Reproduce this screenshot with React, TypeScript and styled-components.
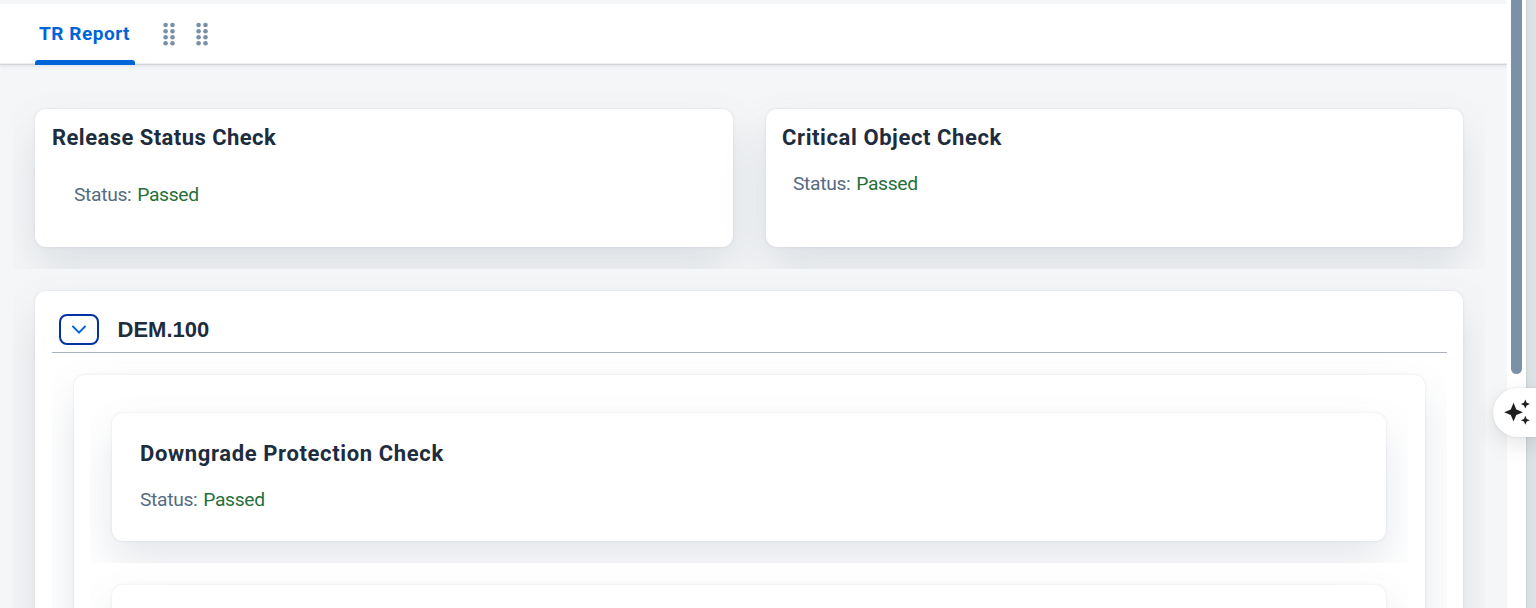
import React from "react";
import styled, { createGlobalStyle } from "styled-components";

const GlobalStyle = createGlobalStyle`
  * { box-sizing: border-box; }
  html, body { margin: 0; height: 100%; overflow: hidden; }
  body { background: #f5f6f7; font-family: Roboto, "Liberation Sans", sans-serif; }
  h2, p { margin: 0; }
`;

const Shell = styled.div`
  position: relative;
  display: flex;
  width: 100vw;
  height: 100vh;
  overflow: hidden;
`;

const Page = styled.main`
  display: flex;
  flex-direction: column;
  width: 1507px;
  flex: none;
  padding-top: 4px;
  background: #f5f6f7;
`;

const TabBar = styled.header`
  display: flex;
  align-items: flex-start;
  flex: none;
  height: 60px;
  padding-left: 35px;
  background: #fff;
  box-shadow: inset 0 -1px 0 #eceeef, 0 1px 0 #d3d6d9, 0 3px 3px rgba(85, 107, 130, 0.1);
`;

const Tab = styled.button`
  display: flex;
  flex-direction: column;
  align-items: flex-start;
  width: 100px;
  height: 61px;
  padding: 0;
  border: 0;
  background: none;
  font: inherit;
  color: #0064d9;
`;

const TabLabel = styled.span`
  height: 56px;
  padding-left: 4px;
  font-size: 19px;
  font-weight: 700;
  line-height: 59px;
  letter-spacing: 0.52px;
  white-space: nowrap;
`;

const TabLine = styled.span`
  width: 100%;
  height: 5px;
  border-radius: 3px 3px 0 0;
  background: #0064d9;
`;

const Grip = styled.svg<{ $gap: number }>`
  flex: none;
  width: 12px;
  height: 24px;
  margin: 18px 0 0 ${(p) => p.$gap}px;
  fill: #788fa6;
`;

const Content = styled.div`
  display: flex;
  flex-direction: column;
  flex: none;
  padding: 23px 22px 0 13px;
`;

const CardRow = styled.section`
  display: grid;
  grid-template-columns: 698px 697px;
  gap: 33px;
  height: 182px;
  padding: 22px;
  overflow: hidden;
`;

const Surface = styled.div`
  border-radius: 11px;
  background: #fff;
  box-shadow: 0 0 2.75px rgba(85, 107, 130, 0.16), 0 22px 44px rgba(85, 107, 130, 0.16);
`;

const CheckCard = styled(Surface)<{ $pad: string; $height: number }>`
  height: ${(p) => p.$height}px;
  padding: ${(p) => p.$pad};
`;

const Title = styled.h2<{ $track: number }>`
  font-size: 22px;
  font-weight: 700;
  line-height: 26px;
  letter-spacing: ${(p) => p.$track}px;
  color: #1d2d3e;
  white-space: nowrap;
`;

const Status = styled.p<{ $top: number; $left: number }>`
  padding: ${(p) => p.$top}px 0 0 ${(p) => p.$left}px;
  font-size: 19.25px;
  line-height: 22px;
  letter-spacing: -0.33px;
  word-spacing: 1.4px;
  color: #556b82;
  white-space: nowrap;
`;

const Passed = styled.span`
  color: #256f3a;
`;

const PanelClip = styled.section`
  height: 400px;
  padding: 22px 22px 0;
  overflow: hidden;
`;

const Panel = styled(Surface)`
  height: 700px;
  padding: 0 16px 0 17px;
`;

const PanelHeader = styled.div`
  display: flex;
  align-items: center;
  gap: 19px;
  height: 62px;
  padding: 16px 0 0 7px;
  border-bottom: 1px solid #a8b3bf;
`;

const Toggle = styled.button`
  display: grid;
  place-items: center;
  width: 40px;
  height: 31px;
  padding: 0;
  border: 2px solid #0032a5;
  border-radius: 8px;
  background: #fff;
`;

const PanelTitle = styled(Title)`
  margin-left: -0.5px;
  font-family: "Liberation Sans", sans-serif;
`;

const InnerClip = styled.div`
  height: 600px;
  padding: 22px 22px 0;
  overflow: hidden;
`;

const InnerPanel = styled(Surface)`
  height: 700px;
  padding: 16px 17px 0 16px;
`;

const ItemClip = styled.div`
  height: 172px;
  padding: 22px;
  overflow: hidden;
`;

const Track = styled.aside`
  width: 19px;
  flex: none;
  padding-left: 4px;
  background: #fff;
`;

const Thumb = styled.div`
  width: 11px;
  height: 374px;
  border-radius: 0 0 6px 6px;
  background: #7b91a8;
`;

const Edge = styled.aside`
  flex: 1;
  background: linear-gradient(90deg, #cdd2d6 0, #dadfe2 2px, #dfe3e6 8px);
`;

const Assistant = styled.button`
  position: absolute;
  top: 388px;
  right: -8px;
  width: 51px;
  height: 49px;
  padding: 0;
  border: 0;
  border-radius: 25px 0 0 25px;
  background: #fff;
  box-shadow: 0 0 3px rgba(0, 0, 0, 0.1), 0 8px 22px rgba(0, 0, 0, 0.1);
`;

const Sparkles = styled.svg`
  display: block;
  width: 26px;
  height: 26px;
  margin: -1px 0 0 11px;
  fill: #1f1f1f;
`;

function GripDots({ gap }: { gap: number }) {
  return (
    <Grip $gap={gap} viewBox="0 0 12 24">
      {[3, 9.2, 15.2, 21.3].map((y) => (
        <React.Fragment key={y}>
          <circle cx="2.6" cy={y} r="2.3" />
          <circle cx="9.5" cy={y} r="2.3" />
        </React.Fragment>
      ))}
    </Grip>
  );
}

function StatusLine({ top, left = 0 }: { top: number; left?: number }) {
  return (
    <Status $top={top} $left={left}>
      Status: <Passed>Passed</Passed>
    </Status>
  );
}

export default function App() {
  return (
    <>
      <GlobalStyle />
      <Shell>
        <Page>
          <TabBar>
            <Tab>
              <TabLabel>TR Report</TabLabel>
              <TabLine />
            </Tab>
            <GripDots gap={28} />
            <GripDots gap={21} />
          </TabBar>
          <Content>
            <CardRow>
              <CheckCard $height={138} $pad="16px 17px">
                <Title $track={0.45}>Release Status Check</Title>
                <StatusLine top={33} left={22} />
              </CheckCard>
              <CheckCard $height={138} $pad="16px 16px">
                <Title $track={0.59}>Critical Object Check</Title>
                <StatusLine top={22} left={11} />
              </CheckCard>
            </CardRow>
            <PanelClip>
              <Panel>
                <PanelHeader>
                  <Toggle aria-label="Collapse">
                    <svg width="16" height="10" viewBox="0 0 16 10" fill="none" stroke="#0064d9" strokeWidth="1.9" strokeLinecap="round" strokeLinejoin="round">
                      <path d="M2 1.5 L8 7.7 L14 1.5" />
                    </svg>
                  </Toggle>
                  <PanelTitle $track={0}>DEM.100</PanelTitle>
                </PanelHeader>
                <InnerClip>
                  <InnerPanel>
                    <ItemClip>
                      <CheckCard $height={128} $pad="28px 28px">
                        <Title $track={0.63}>Downgrade Protection Check</Title>
                        <StatusLine top={22} />
                      </CheckCard>
                    </ItemClip>
                    <ItemClip>
                      <CheckCard $height={128} $pad="28px 28px" />
                    </ItemClip>
                  </InnerPanel>
                </InnerClip>
              </Panel>
            </PanelClip>
          </Content>
        </Page>
        <Track>
          <Thumb />
        </Track>
        <Edge />
        <Assistant aria-label="Assistant">
          <Sparkles viewBox="0 0 26 26">
            <path d="M9.5 3.8 L12.3 10.4 L19 13.3 L12.3 16.1 L9.5 22.6 L6.8 16.1 L0.2 13.3 L6.8 10.4 Z" />
            <path d="M21.3 0.6 L22.7 3.7 L25.9 5.1 L22.7 6.4 L21.3 9.6 L20 6.4 L16.8 5.1 L20 3.7 Z" />
            <path d="M21.3 16.7 L22.7 19.9 L25.9 21.3 L22.7 22.6 L21.3 25.8 L20 22.6 L16.8 21.3 L20 19.9 Z" />
          </Sparkles>
        </Assistant>
      </Shell>
    </>
  );
}
